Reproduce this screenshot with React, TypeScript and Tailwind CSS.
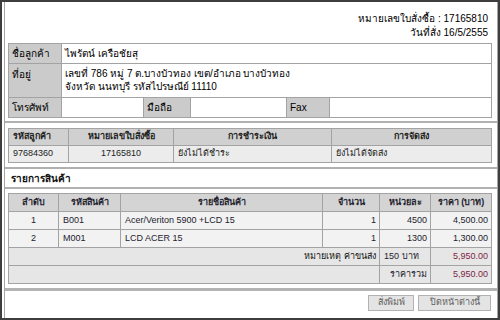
import React from "react";

const sans = { fontFamily: '"Liberation Sans", Tahoma, "Noto Sans", sans-serif' };

export default function App() {
  const cellB = "border border-[#a3a3a3]";
  return (
    <div
      className="w-[500px] h-[320px] border-2 border-[#3e3e3e] bg-white flex flex-col overflow-hidden text-[#111]"
      style={sans}
    >
      <div className="flex-1 ml-[2px] border-x border-[#a6a6a6] flex flex-col">
        {/* Section 1 */}
        <div className="pl-[3px] pr-[5px] pt-[10px] pb-[3px] border-b-2 border-[#b0b0b0]">
          <div className="text-right pr-[4px] text-[10px] leading-[14px] text-black">
            <div>หมายเลขใบสั่งซื้อ : 17165810</div>
            <div>วันที่สั่ง 16/5/2555</div>
          </div>
          <table className="mt-[3px] w-full border-collapse text-[10px] text-black">
            <colgroup>
              <col className="w-[53px]" />
              <col className="w-[82px]" />
              <col className="w-[47px]" />
              <col className="w-[96px]" />
              <col className="w-[43px]" />
              <col />
            </colgroup>
            <tbody>
              <tr className="h-[20px]">
                <td className={`${cellB} bg-[#cbcbcb] px-[3px]`}>ชื่อลูกค้า</td>
                <td className={`${cellB} px-[3px]`} colSpan={5}>ไพรัตน์ เครือชัยสุ</td>
              </tr>
              <tr className="h-[34px]">
                <td className={`${cellB} bg-[#cbcbcb] px-[3px] align-top pt-[3px]`}>ที่อยู่</td>
                <td className={`${cellB} px-[3px] leading-[13px] align-top pt-[3px]`} colSpan={5}>
                  <div>เลขที่ 786 หมู่ 7 ต.บางบัวทอง เขต/อำเภอ บางบัวทอง</div>
                  <div>จังหวัด นนทบุรี รหัสไปรษณีย์ 11110</div>
                </td>
              </tr>
              <tr className="h-[20px]">
                <td className={`${cellB} bg-[#cbcbcb] px-[3px]`}>โทรศัพท์</td>
                <td className={`${cellB}`}></td>
                <td className={`${cellB} bg-[#cbcbcb] px-[3px]`}>มือถือ</td>
                <td className={`${cellB}`}></td>
                <td className={`${cellB} bg-[#cbcbcb] px-[3px]`}>Fax</td>
                <td className={`${cellB}`}></td>
              </tr>
            </tbody>
          </table>
        </div>

        {/* Section 2 */}
        <div className="pl-[3px] pr-[5px] pt-[5px] pb-[4px] border-b-2 border-[#b0b0b0]">
          <table className="w-full border-collapse text-[9px] text-[#222]">
            <colgroup>
              <col className="w-[60px]" />
              <col className="w-[105px]" />
              <col className="w-[158px]" />
              <col />
            </colgroup>
            <thead>
              <tr className="h-[17px] bg-[#d0d0d0] font-bold">
                <td className={`${cellB} px-[4px]`}>รหัสลูกค้า</td>
                <td className={`${cellB} text-center`}>หมายเลขใบสั่งซื้อ</td>
                <td className={`${cellB} text-center`}>การชำระเงิน</td>
                <td className={`${cellB} text-center`}>การจัดส่ง</td>
              </tr>
            </thead>
            <tbody>
              <tr className="h-[17px] bg-[#ececec]">
                <td className={`${cellB} px-[4px]`}>97684360</td>
                <td className={`${cellB} text-center`}>17165810</td>
                <td className={`${cellB} px-[4px]`}>ยังไม่ได้ชำระ</td>
                <td className={`${cellB} px-[4px]`}>ยังไม่ได้จัดส่ง</td>
              </tr>
            </tbody>
          </table>
        </div>

        {/* Section 3 */}
        <div className="h-[20px] flex items-center pl-[6px] border-b-2 border-[#b0b0b0] text-[10px] font-bold text-[#111]">
          รายการสินค้า
        </div>

        {/* Section 4 */}
        <div className="pl-[3px] pr-[5px] pt-[4px] pb-[4px] border-b-[3px] border-[#b4b4b4]">
          <table className="w-full border-collapse text-[9px] text-[#22222e]">
            <colgroup>
              <col className="w-[50px]" />
              <col className="w-[62px]" />
              <col className="w-[202px]" />
              <col className="w-[57px]" />
              <col className="w-[51px]" />
              <col />
            </colgroup>
            <thead>
              <tr className="h-[18px] bg-[#d4d4d4] font-bold">
                <td className={`${cellB} text-center`}>ลำดับ</td>
                <td className={`${cellB} text-center`}>รหัสสินค้า</td>
                <td className={`${cellB} text-center`}>รายชื่อสินค้า</td>
                <td className={`${cellB} text-center`}>จำนวน</td>
                <td className={`${cellB} text-center`}>หน่วยละ</td>
                <td className={`${cellB} text-center`}>ราคา (บาท)</td>
              </tr>
            </thead>
            <tbody>
              <tr className="h-[18px] bg-[#f2f2f2]">
                <td className={`${cellB} text-center`}>1</td>
                <td className={`${cellB} px-[4px]`}>B001</td>
                <td className={`${cellB} px-[4px]`}>Acer/Veriton 5900 +LCD 15</td>
                <td className={`${cellB} px-[3px] text-right`}>1</td>
                <td className={`${cellB} px-[3px] text-right`}>4500</td>
                <td className={`${cellB} px-[3px] text-right`}>4,500.00</td>
              </tr>
              <tr className="h-[18px] bg-[#f2f2f2]">
                <td className={`${cellB} text-center`}>2</td>
                <td className={`${cellB} px-[4px]`}>M001</td>
                <td className={`${cellB} px-[4px]`}>LCD ACER 15</td>
                <td className={`${cellB} px-[3px] text-right`}>1</td>
                <td className={`${cellB} px-[3px] text-right`}>1300</td>
                <td className={`${cellB} px-[3px] text-right`}>1,300.00</td>
              </tr>
              <tr className="h-[18px] bg-[#e6e6e6]">
                <td className={`${cellB} px-[3px] text-right text-[#111]`} colSpan={4}>หมายเหตุ ค่าขนส่ง</td>
                <td className={`${cellB} px-[4px]`}>150 บาท</td>
                <td className={`${cellB} px-[3px] text-right text-[#7d1f45]`}>5,950.00</td>
              </tr>
              <tr className="h-[18px] bg-[#e6e6e6]">
                <td className={`${cellB}`} colSpan={4}></td>
                <td className={`${cellB} px-[3px] text-right`}>ราคารวม</td>
                <td className={`${cellB} px-[3px] text-right text-[#7d1f45]`}>5,950.00</td>
              </tr>
            </tbody>
          </table>
        </div>

        {/* Buttons */}
        <div className="flex justify-end gap-[4px] pt-[4px] pr-[6px]">
          <button className="h-[16px] w-[46px] bg-[#e4e4e4] border border-[#b2b2b2] text-[9px] text-[#5e5e5e] flex items-center justify-center">
            สั่งพิมพ์
          </button>
          <button className="h-[16px] w-[73px] bg-[#e4e4e4] border border-[#b2b2b2] text-[9px] text-[#5e5e5e] flex items-center justify-center">
            ปิดหน้าต่างนี้
          </button>
        </div>
      </div>
    </div>
  );
}
